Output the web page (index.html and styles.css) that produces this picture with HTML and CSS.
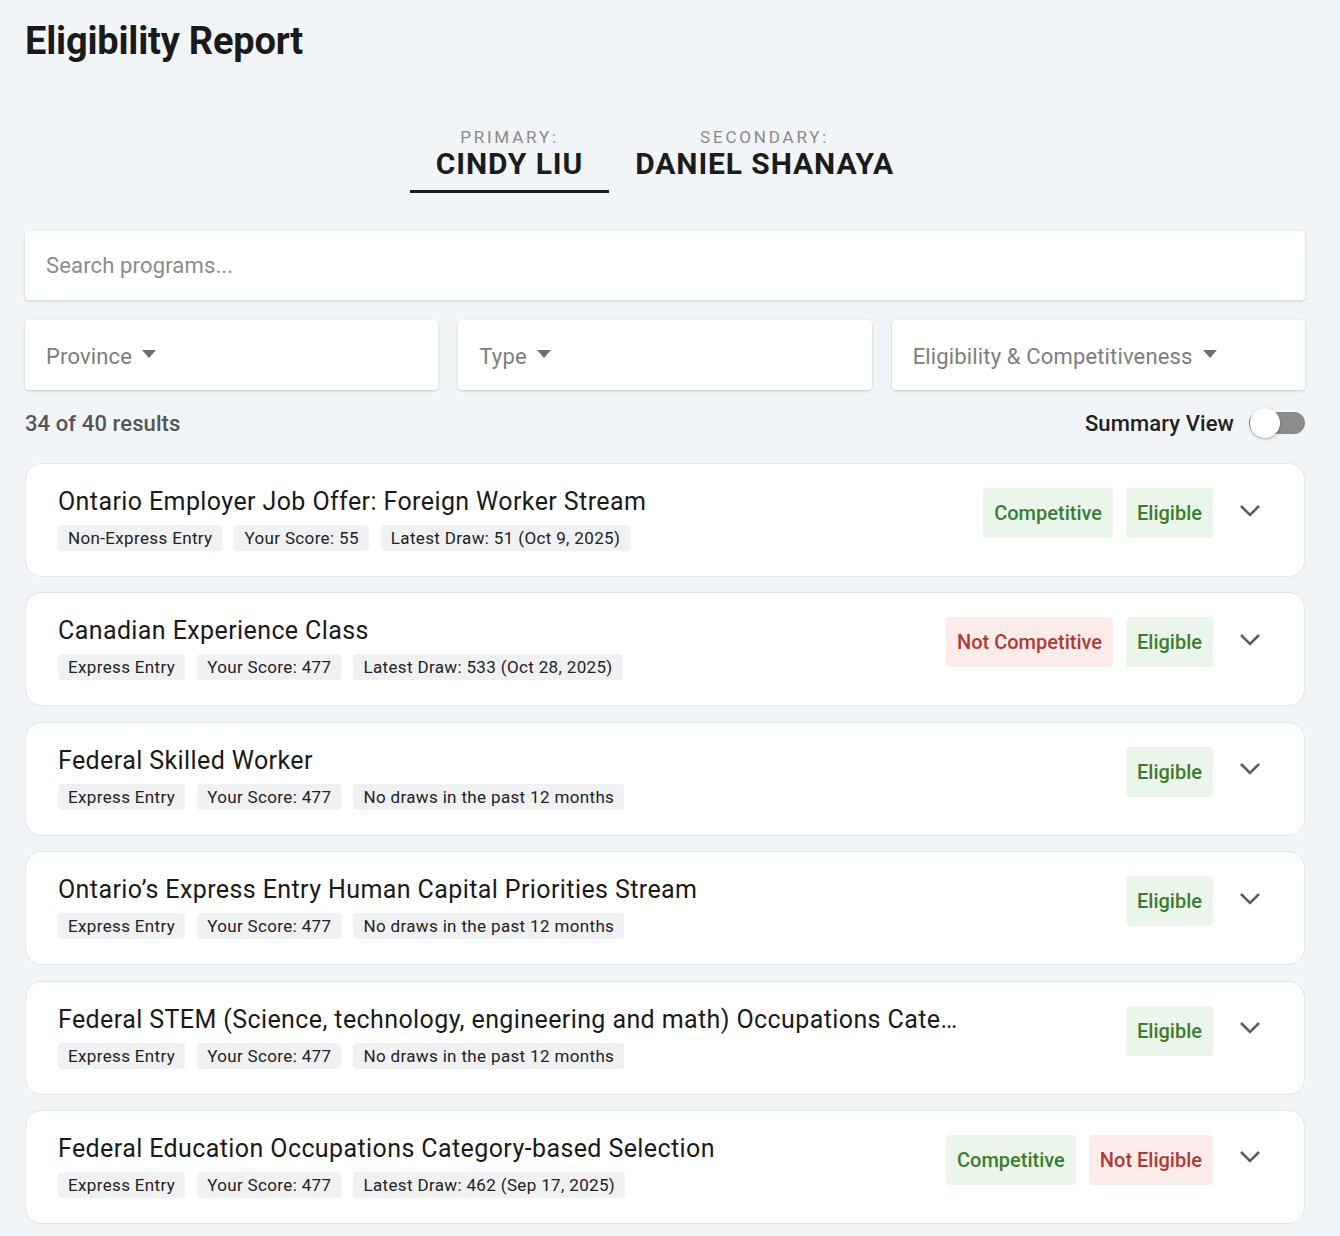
FILE: index.html
```html
<!DOCTYPE html>
<html lang="en">
<head>
    <meta charset="UTF-8">
    <title>Eligibility Report</title>
    <link rel="stylesheet" href="styles.css">
</head>
<body>
    <div class="page">
        <h1 class="title">Eligibility Report</h1>

        <div class="tabs">
            <div class="tab active">
                <div class="tab-label">PRIMARY:</div>
                <div class="tab-name">CINDY LIU</div>
            </div>
            <div class="tab">
                <div class="tab-label">SECONDARY:</div>
                <div class="tab-name">DANIEL SHANAYA</div>
            </div>
        </div>

        <div class="search">
            <input type="text" placeholder="Search programs...">
        </div>

        <div class="filters">
            <div class="filter">Province <span class="caret"></span></div>
            <div class="filter">Type <span class="caret"></span></div>
            <div class="filter">Eligibility &amp; Competitiveness <span class="caret"></span></div>
        </div>

        <div class="results-bar">
            <div class="count">34 of 40 results</div>
            <div class="summary">
                Summary View
                <span class="switch"><span class="knob"></span></span>
            </div>
        </div>

        <ul class="list">
            <li class="card">
                <div class="card-main">
                    <div class="card-title">Ontario Employer Job Offer: Foreign Worker Stream</div>
                    <div class="tags">
                        <span class="tag">Non-Express Entry</span>
                        <span class="tag">Your Score: 55</span>
                        <span class="tag">Latest Draw: 51 (Oct 9, 2025)</span>
                    </div>
                </div>
                <div class="card-side">
                    <span class="badge good">Competitive</span>
                    <span class="badge good">Eligible</span>
                    <span class="chev"><svg width="22" height="13" viewBox="0 0 22 13"><path d="M2 2l9 9 9-9" fill="none" stroke="#5f5f5f" stroke-width="2.6"/></svg></span>
                </div>
            </li>
            <li class="card">
                <div class="card-main">
                    <div class="card-title">Canadian Experience Class</div>
                    <div class="tags">
                        <span class="tag">Express Entry</span>
                        <span class="tag">Your Score: 477</span>
                        <span class="tag">Latest Draw: 533 (Oct 28, 2025)</span>
                    </div>
                </div>
                <div class="card-side">
                    <span class="badge bad">Not Competitive</span>
                    <span class="badge good">Eligible</span>
                    <span class="chev"><svg width="22" height="13" viewBox="0 0 22 13"><path d="M2 2l9 9 9-9" fill="none" stroke="#5f5f5f" stroke-width="2.6"/></svg></span>
                </div>
            </li>
            <li class="card">
                <div class="card-main">
                    <div class="card-title">Federal Skilled Worker</div>
                    <div class="tags">
                        <span class="tag">Express Entry</span>
                        <span class="tag">Your Score: 477</span>
                        <span class="tag">No draws in the past 12 months</span>
                    </div>
                </div>
                <div class="card-side">
                    <span class="badge good">Eligible</span>
                    <span class="chev"><svg width="22" height="13" viewBox="0 0 22 13"><path d="M2 2l9 9 9-9" fill="none" stroke="#5f5f5f" stroke-width="2.6"/></svg></span>
                </div>
            </li>
            <li class="card">
                <div class="card-main">
                    <div class="card-title">Ontario’s Express Entry Human Capital Priorities Stream</div>
                    <div class="tags">
                        <span class="tag">Express Entry</span>
                        <span class="tag">Your Score: 477</span>
                        <span class="tag">No draws in the past 12 months</span>
                    </div>
                </div>
                <div class="card-side">
                    <span class="badge good">Eligible</span>
                    <span class="chev"><svg width="22" height="13" viewBox="0 0 22 13"><path d="M2 2l9 9 9-9" fill="none" stroke="#5f5f5f" stroke-width="2.6"/></svg></span>
                </div>
            </li>
            <li class="card">
                <div class="card-main">
                    <div class="card-title">Federal STEM (Science, technology, engineering and math) Occupations Category-based Selection</div>
                    <div class="tags">
                        <span class="tag">Express Entry</span>
                        <span class="tag">Your Score: 477</span>
                        <span class="tag">No draws in the past 12 months</span>
                    </div>
                </div>
                <div class="card-side">
                    <span class="badge good">Eligible</span>
                    <span class="chev"><svg width="22" height="13" viewBox="0 0 22 13"><path d="M2 2l9 9 9-9" fill="none" stroke="#5f5f5f" stroke-width="2.6"/></svg></span>
                </div>
            </li>
            <li class="card">
                <div class="card-main">
                    <div class="card-title">Federal Education Occupations Category-based Selection</div>
                    <div class="tags">
                        <span class="tag">Express Entry</span>
                        <span class="tag">Your Score: 477</span>
                        <span class="tag">Latest Draw: 462 (Sep 17, 2025)</span>
                    </div>
                </div>
                <div class="card-side">
                    <span class="badge good">Competitive</span>
                    <span class="badge bad">Not Eligible</span>
                    <span class="chev"><svg width="22" height="13" viewBox="0 0 22 13"><path d="M2 2l9 9 9-9" fill="none" stroke="#5f5f5f" stroke-width="2.6"/></svg></span>
                </div>
            </li>
        </ul>
    </div>
</body>
</html>
```

FILE: styles.css
```css
body,div,ul,li,h1{
    padding: 0;
    margin: 0;
}
ul{
    list-style-type: none;
}
body{
    background-color: #f2f5f8;
    font-family: Roboto, 'Liberation Sans', sans-serif;
    color: #1c1c1c;
}
.page{
    padding: 17px 35px 0 25px;
}
.title{
    font-size: 38px;
    line-height: 48px;
    font-weight: 700;
    letter-spacing: -0.2px;
    color: #1a1a1a;
}
.tabs{
    display: flex;
    justify-content: center;
    margin-top: 62px;
}
.tab{
    padding: 0 26px 9px;
    border-bottom: 3px solid transparent;
    text-align: center;
}
.tab.active{
    border-bottom-color: #1c1c1c;
}
.tab-label{
    font-size: 17px;
    line-height: 20px;
    letter-spacing: 2.8px;
    color: #8a8a8a;
}
.tab-name{
    font-size: 30px;
    line-height: 34px;
    font-weight: 700;
    letter-spacing: 0.9px;
    color: #1c1c1c;
}
.search{
    margin-top: 38px;
    height: 69px;
    background-color: #fff;
    border-radius: 4px;
    box-shadow: 0 1px 3px rgba(0,0,0,.18);
}
.search input{
    width: 100%;
    height: 100%;
    box-sizing: border-box;
    padding: 0 21px;
    border: none;
    background: transparent;
    outline: none;
    font-family: Roboto, 'Liberation Sans', sans-serif;
    font-size: 22px;
    letter-spacing: 0.15px;
    color: #333;
}
.search input::placeholder{
    color: #8b8b8b;
}
.filters{
    display: grid;
    grid-template-columns: 1fr 1fr 1fr;
    gap: 20px;
    margin-top: 20px;
}
.filter{
    display: flex;
    align-items: center;
    height: 70px;
    padding: 2px 21px 0;
    box-sizing: border-box;
    background-color: #fff;
    border-radius: 4px;
    box-shadow: 0 1px 3px rgba(0,0,0,.18);
    font-size: 22px;
    letter-spacing: 0.15px;
    color: #7d7d7d;
}
.caret{
    margin-left: 10px;
    margin-top: -4px;
    border-left: 7px solid transparent;
    border-right: 7px solid transparent;
    border-top: 8px solid #707070;
}
.results-bar{
    display: flex;
    justify-content: space-between;
    align-items: center;
    height: 34px;
    margin-top: 16px;
}
.count{
    font-size: 22px;
    font-weight: 500;
    letter-spacing: 0.1px;
    color: #555;
}
.summary{
    display: flex;
    align-items: center;
    font-size: 22px;
    font-weight: 500;
    letter-spacing: 0.1px;
    color: #222;
}
.switch{
    position: relative;
    width: 56px;
    height: 22px;
    margin-left: 15px;
    border-radius: 11px;
    background-color: #8c8c8c;
}
.knob{
    position: absolute;
    top: -4px;
    left: 1px;
    width: 30px;
    height: 30px;
    border-radius: 50%;
    background-color: #fff;
    box-shadow: 0 1px 3px rgba(0,0,0,.35);
}
.list{
    display: flex;
    flex-direction: column;
    gap: 15.4px;
    margin-top: 23px;
}
.card{
    display: flex;
    align-items: flex-start;
    justify-content: space-between;
    padding: 23px 34px 25px 32px;
    background-color: #fff;
    border: 1px solid #e2e5e9;
    border-radius: 16px;
}
.card-main{
    min-width: 0;
}
.card-title{
    max-width: 900px;
    overflow: hidden;
    white-space: nowrap;
    text-overflow: ellipsis;
    font-size: 25px;
    line-height: 30px;
    letter-spacing: 0.4px;
    color: #1a1a1a;
}
.tags{
    display: flex;
    gap: 12px;
    margin-top: 8px;
}
.tag{
    height: 26px;
    line-height: 26px;
    padding: 0 10px;
    border-radius: 4px;
    background-color: #f0f1f3;
    font-size: 17px;
    letter-spacing: 0.35px;
    color: #222;
}
.card-side{
    display: flex;
    align-items: center;
    gap: 13px;
    flex-shrink: 0;
    margin-top: 1px;
}
.badge{
    height: 50px;
    line-height: 50px;
    padding: 0 11px;
    border-radius: 4px;
    font-size: 20px;
    font-weight: 500;
}
.badge.good{
    background-color: #ebf6ea;
    color: #3b7d2e;
}
.badge.bad{
    background-color: #fbecea;
    color: #b03a33;
}
.chev{
    display: flex;
    align-items: center;
    justify-content: center;
    width: 40px;
    height: 40px;
    margin-left: 4px;
    margin-top: -6px;
}
```
